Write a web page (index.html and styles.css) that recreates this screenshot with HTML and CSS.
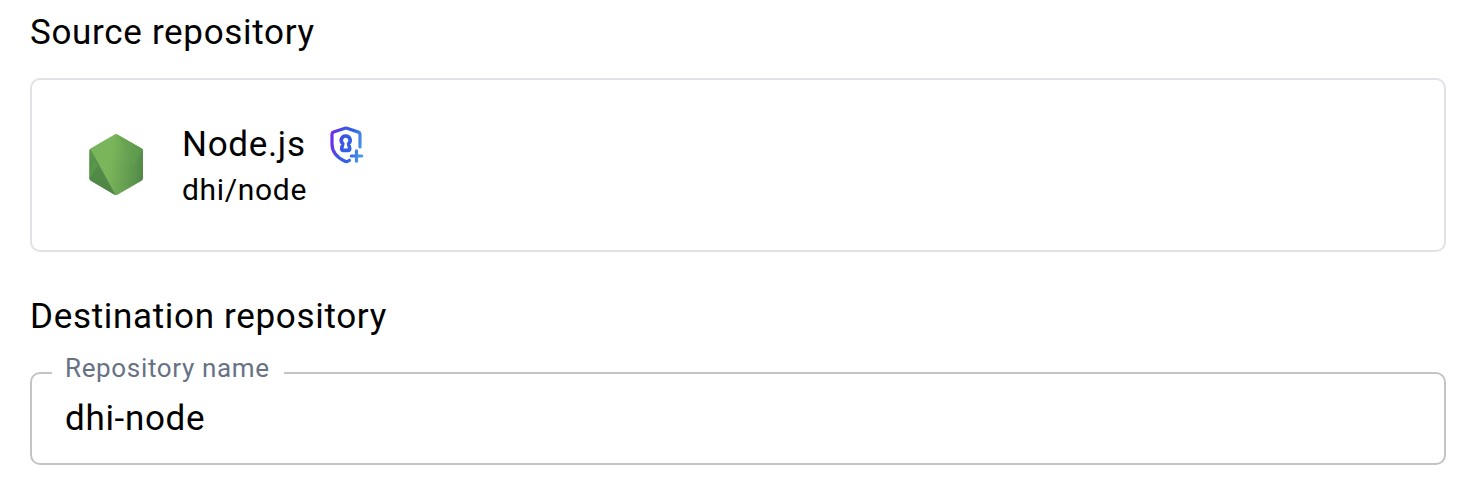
FILE: index.html
```html
<!DOCTYPE html>
<html lang="en">
<head>
<meta charset="utf-8">
<title>Mirror repository</title>
<link rel="stylesheet" href="styles.css">
</head>
<body>
<main class="page">
  <h2 class="heading">Source repository</h2>
  <section class="card">
    <svg class="logo" viewBox="0 0 54 62" aria-hidden="true">
      <defs>
        <clipPath id="hex"><path d="M25.6.4Q27-.5 28.4.4L52.500 14.300Q54 15.100 54 16.500V44.500Q54 46 52.600 46.800L28.400 60.700Q27 61.500 25.600 60.700L1.800 46.800Q.4 46 .4 44.500V16.500Q.4 15.100 1.900 14.300Z"/></clipPath>
        <linearGradient id="face" gradientUnits="userSpaceOnUse" x1="10" y1="28" x2="54" y2="34"><stop offset=".25" stop-color="#7ab55b"/><stop offset="1" stop-color="#538c48"/></linearGradient>
        <linearGradient id="left" x1="0" y1="0" x2=".1" y2="1"><stop offset="0" stop-color="#5c9a4d"/><stop offset=".4" stop-color="#528c48"/><stop offset="1" stop-color="#4f8545"/></linearGradient>
        <linearGradient id="right" x1="0" y1="0" x2="1" y2="0"><stop offset="0" stop-color="#6aa650"/><stop offset="1" stop-color="#5e9b4c"/></linearGradient>
      </defs>
      <g clip-path="url(#hex)">
        <path fill="url(#face)" d="M0-1H54V62H0Z"/>
        <path fill="url(#left)" d="M0 15.500 1.500 15 27 62H0Z"/>
        <path fill="#6aa951" d="M0 45.500V36L5 27 9 31Z" opacity=".35"/>
        <path fill="url(#right)" d="M28 0 54 15 45.500 30.500Z" opacity=".7"/>
        <path fill="#4f8846" d="M54 15.500V62L45.500 30.500Z" opacity=".15"/>
      </g>
    </svg>
    <div class="info">
      <div class="title-row">
        <span class="title">Node.js</span>
        <svg class="shield" viewBox="0 0 34 38" fill="none" stroke="url(#sg)" stroke-linecap="round" stroke-linejoin="round" aria-hidden="true">
          <defs><linearGradient id="sg" gradientUnits="userSpaceOnUse" x1="1" y1="13" x2="33" y2="20"><stop offset="0" stop-color="#6f2cec"/><stop offset=".4" stop-color="#365ae4"/><stop offset=".6" stop-color="#315fe5"/><stop offset="1" stop-color="#4c9be8"/></linearGradient></defs>
          <path stroke-width="3.200" d="M30 21V8.300Q30 6.600 28.400 6.100L17 2.300Q16 2 15 2.300L3.600 6.100Q2 6.600 2 8.300V18C2 27.500 8 32 15 35.300Q16.500 36 18 35.200L19.500 34.300"/>
          <path stroke-width="3.600" d="M15.700 10A4.300 4.300 0 0 0 12.800 17.600L11.700 22.400Q11.400 24.400 13.300 24.400H18.100Q20 24.400 19.700 22.400L18.600 17.600A4.300 4.300 0 0 0 15.700 10Z"/>
          <path stroke-width="3.200" d="M26.500 24.800V35.200M21.300 30H31.700"/>
        </svg>
      </div>
      <div class="slug">dhi/node</div>
    </div>
  </section>
  <h2 class="heading heading-destination">Destination repository</h2>
  <fieldset class="field">
    <legend class="notch"><label class="label" for="repo">Repository name</label></legend>
    <input class="input" id="repo" type="text" value="dhi-node" spellcheck="false">
  </fieldset>
</main>
</body>
</html>
```
FILE: styles.css
```css
* { box-sizing: border-box; }
body { margin: 0; background: #fff; color: #000; font-family: Roboto, sans-serif; }
.page { padding: 9px 26px 0 30px; }
.heading { margin: 0; height: 48px; font-size: 35px; line-height: 48px; font-weight: 400; letter-spacing: .68px; }
.card { display: flex; height: 174px; margin-top: 21px; padding: 41px 57px; border: 2px solid #e1e2e6; border-radius: 10px; }
.logo { width: 54px; height: 62px; margin: 13px 39px 0 0; }
.title-row { display: flex; height: 48px; }
.title { font-size: 35px; line-height: 48px; letter-spacing: .68px; }
.shield { width: 34px; height: 38px; margin: 5px 0 0 24.6px; }
.slug { font-size: 30px; line-height: 42px; letter-spacing: .68px; }
.heading-destination { margin-top: 41px; }
.field { display: block; height: 101px; margin: 23px 0 0; padding: 0 33px 0 20px; border: 2px solid #c4c4c4; border-radius: 10px; min-width: 0; }
.notch { height: 18px; padding: 0 14px 0 13px; line-height: 18px; }
.label { position: relative; top: -5px; display: block; font-size: 26px; line-height: 18px; letter-spacing: .65px; color: #677285; }
.input { display: block; width: 100%; height: 56px; margin: 9px 0 0; padding: 0 0 0 13px; border: 0; outline: 0; background: none; color: #000; font: 400 35px/56px Roboto, sans-serif; letter-spacing: .68px; }
```
